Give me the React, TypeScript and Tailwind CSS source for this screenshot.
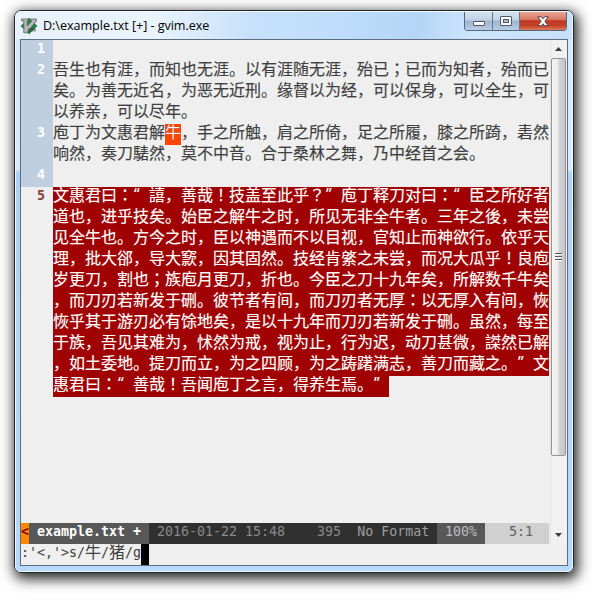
import React from 'react';

const MONO = "font-['DejaVu_Sans_Mono','Noto_Sans_CJK_SC',monospace]";
const CJK = "font-['Noto_Sans_CJK_SC',sans-serif]";

const plain = [
  '',
  '吾生也有涯，而知也无涯。以有涯随无涯，殆已；已而为知者，殆而已',
  '矣。为善无近名，为恶无近刑。缘督以为经，可以保身，可以全生，可',
  '以养亲，可以尽年。',
  '庖丁为文惠君解牛，手之所触，肩之所倚，足之所履，膝之所踦，砉然',
  '响然，奏刀騞然，莫不中音。合于桑林之舞，乃中经首之会。',
  '',
];
const numbers = ['1', '2', '', '', '3', '', '4'];

const selected = [
  '文惠君曰：“譆，善哉！技盖至此乎？”庖丁释刀对曰：“臣之所好者',
  '道也，进乎技矣。始臣之解牛之时，所见无非全牛者。三年之後，未尝',
  '见全牛也。方今之时，臣以神遇而不以目视，官知止而神欲行。依乎天',
  '理，批大郤，导大窾，因其固然。技经肯綮之未尝，而况大瓜乎！良庖',
  '岁更刀，割也；族庖月更刀，折也。今臣之刀十九年矣，所解数千牛矣',
  '，而刀刃若新发于硎。彼节者有间，而刀刃者无厚：以无厚入有间，恢',
  '恢乎其于游刃必有馀地矣，是以十九年而刀刃若新发于硎。虽然，每至',
  '于族，吾见其难为，怵然为戒，视为止，行为迟，动刀甚微，謋然已解',
  '，如土委地。提刀而立，为之四顾，为之踌躇满志，善刀而藏之。”文',
  '惠君曰：“善哉！吾闻庖丁之言，得养生焉。”',
];

function Cell({ ch, match }: { ch: string; match: boolean }) {
  if ('“”'.includes(ch))
    return <span className="w-4 shrink-0 pl-px font-['Open_Sans',sans-serif]">{ch}</span>;
  if ('：；！？'.includes(ch))
    return <span className="w-4 shrink-0 font-['Noto_Sans_CJK_JP',sans-serif]">{ch}</span>;
  return <span className={match ? 'h-[21px] w-4 shrink-0 bg-[#ff4500] text-white' : 'w-4 shrink-0'}>{ch}</span>;
}

function Line({ text, sel = false, markAt = -1 }: { text: string; sel?: boolean; markAt?: number }) {
  return (
    <div
      className={`flex h-[21px] w-fit text-[16px] leading-[14px] ${CJK} ${
        sel
          ? 'bg-[#a00000] text-white [-webkit-text-stroke:0.15px_white]'
          : 'text-[#404040] [-webkit-text-stroke:0.15px_#404040]'
      }`}
    >
      {[...text].map((ch, i) => (
        <Cell key={i} ch={ch} match={i === markAt} />
      ))}
    </div>
  );
}

function VimIcon() {
  return (
    <svg width="16" height="16" viewBox="0 0 16 16">
      <path d="M8 0l8 8-8 8-8-8z" fill="#1c8a43" stroke="#2c6b40" strokeWidth=".7" />
      <path
        d="M.6 1h6.600v2H6.200v5l4.700-5h-1V1h5.500v2L5.800 14.800H2.800V3H.6z"
        fill="#b4b8b7"
        stroke="#5b605e"
        strokeWidth=".8"
      />
      <path d="M8 10v3.500M9.800 13.500V10.500M11.900 13.500V10.500M14 13.500V10.800M9.800 10.800h4.200" stroke="#3c4a43" strokeWidth="1" />
    </svg>
  );
}

function TitleBar() {
  return (
    <div className="flex h-[27px] shrink-0 bg-[linear-gradient(90deg,#e8f2fd_0%,#eaf4fe_24%,#c8e1fb_42%,#bddcfb_60%,#b4d5f5_72%,#cde5fd_82%,#c7e1fb_100%)]">
      <div className="flex h-full flex-1 items-center pl-[5px]">
        <VimIcon />
        <span className="pl-[6px] font-['Open_Sans',sans-serif] text-[12.6px] leading-4 tracking-[-0.04px] whitespace-pre text-black">
          D:\example.txt [+] - gvim.exe
        </span>
      </div>
      <div className="mr-[5px] flex h-[19px] w-[103px] overflow-hidden rounded-b-[4px] border border-t-0 border-[#55687f]">
        <div className="flex w-[28px] items-start justify-center border-r border-[#64778d] bg-[linear-gradient(#d5e2f0_0%,#c0d2e5_45%,#9fb6cf_50%,#b7cde4_100%)] pt-[9px]">
          <div className="h-[5px] w-[12px] rounded-[1px] border border-[#4e5866] bg-white" />
        </div>
        <div className="flex w-[27px] items-start justify-center border-r border-[#64778d] bg-[linear-gradient(#d5e2f0_0%,#c0d2e5_45%,#9fb6cf_50%,#b7cde4_100%)] pt-[4px]">
          <div className="flex h-[10px] w-[12px] items-center justify-center rounded-[1px] border border-[#4e5866] bg-white">
            <div className="h-[4px] w-[6px] border border-[#4e5866] bg-[#a9bfd6]" />
          </div>
        </div>
        <div className="flex flex-1 items-start justify-center bg-[linear-gradient(#e9a596_0%,#d87862_42%,#c03a22_48%,#c4412a_75%,#dc7a5c_100%)] pt-[4px]">
          <svg width="12" height="11" viewBox="0 0 12 11">
            <path
              d="M.8.7h3.500L6 2.800 7.700.7h3.500L7.900 5.200l3.400 4.500H7.700L6 7.700 4.300 9.700H.7l3.400-4.500z"
              fill="#fff"
              stroke="#54434a"
              strokeWidth="1"
            />
          </svg>
        </div>
      </div>
    </div>
  );
}

function ScrollBar() {
  return (
    <div className="flex w-[16px] flex-col items-stretch border-l border-[#e3e3e3] bg-[#f1f1f1]">
      <div className="flex h-[18px] items-center justify-center">
        <svg width="7" height="4" viewBox="0 0 7 4">
          <path d="M0 4L3.500 0 7 4z" fill="#3c3c3c" />
        </svg>
      </div>
      <div className="flex h-[398px] items-center justify-center rounded-[2px] border border-[#959595] bg-[linear-gradient(90deg,#f6f6f6_0%,#ececed_45%,#d2d3d7_55%,#c4c5ca_100%)]">
        <div className="flex w-[7px] flex-col gap-px">
          {[0, 1, 2].map((n) => (
            <div key={n} className="h-[2px] border-t border-[#555] bg-white" />
          ))}
        </div>
      </div>
      <div className="flex-1" />
      <div className="flex h-[18px] items-center justify-center">
        <svg width="7" height="4" viewBox="0 0 7 4">
          <path d="M0 0h7L3.500 4z" fill="#3c3c3c" />
        </svg>
      </div>
    </div>
  );
}

function Buffer() {
  return (
    <div className="flex w-[529px] flex-col">
      <div className="flex h-[147px]">
        <div className={`w-8 bg-[#c0cfe0] pr-2 text-right text-[13.3px] font-bold leading-[17px] text-white ${MONO}`}>
          {numbers.map((n, i) => (
            <div key={i} className="h-[21px]">{n}</div>
          ))}
        </div>
        <div>
          {plain.map((t, i) => (
            <Line key={i} text={t} markAt={i === 4 ? 7 : -1} />
          ))}
        </div>
      </div>
      <div className="flex flex-1">
        <div className={`w-8 pr-2 text-right text-[13.3px] font-bold leading-[17px] text-[#854040] ${MONO}`}>5</div>
        <div>
          {selected.map((t, i) => (
            <Line key={i} text={t} sel />
          ))}
        </div>
      </div>
      <div className={`flex h-[21px] text-[13.3px] leading-[17px] whitespace-pre ${MONO}`}>
        <span className="w-2 bg-[#ff8700] font-bold text-[#870000]">{'<'}</span>
        <span className="w-[120px] bg-[#585858] font-bold text-white">{' example.txt +'}</span>
        <span className="w-[288px] bg-[#303030] text-[#8a8a8a]">
          {' 2016-01-22 15:48    395  '}
          <span className="text-[#9e9e9e]">No Format</span>
        </span>
        <span className="w-12 bg-[#585858] text-[#bcbcbc]">{' 100%'}</span>
        <span className="w-16 bg-[#d0d0d0] text-[#626262]">{'   5:1'}</span>
      </div>
    </div>
  );
}

function CommandLine() {
  return (
    <div className={`flex h-[21px] text-[13.3px] leading-[17px] text-[#404040] ${MONO}`}>
      <span>{":'<,'>s/"}</span>
      <span className={`w-4 text-[16px] leading-[14px] ${CJK}`}>牛</span>
      <span>/</span>
      <span className={`w-4 text-[16px] leading-[14px] ${CJK}`}>猪</span>
      <span>/g</span>
      <span className="h-[21px] w-2 bg-black" />
    </div>
  );
}

export default function App() {
  return (
    <div className="h-[601px] w-[600px] overflow-hidden bg-white pt-[10px] pl-[14px]">
      <div className="flex h-[563px] w-[560px] flex-col rounded-[7px] border border-[#1c2530] bg-[linear-gradient(#d4e8fd_0px,#d8eafc_158px,#aed1f4_162px,#b7d9fb_100%)] shadow-[2px_4px_13px_2px_rgba(0,0,0,0.85)]">
        <div className="flex flex-1 flex-col overflow-hidden rounded-[6px] border border-[#f2faff]">
          <TitleBar />
          <div className="mx-[4px] flex h-[527px] flex-col border border-[#5c6d80] bg-[#efefef]">
            <div className="flex h-[504px]">
              <Buffer />
              <ScrollBar />
            </div>
            <CommandLine />
          </div>
        </div>
      </div>
    </div>
  );
}
